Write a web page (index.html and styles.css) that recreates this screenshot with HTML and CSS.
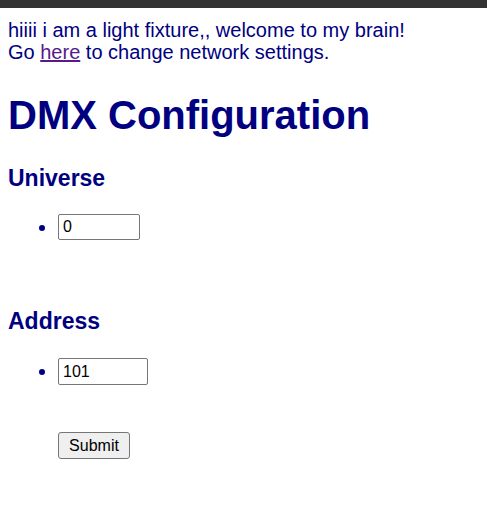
FILE: index.html
```html
<!DOCTYPE html>
<html>
<head>
<meta charset="utf-8">
<link rel="stylesheet" href="styles.css">
</head>
<body>
<div class="topbar"></div>
<main class="page">
  <p class="intro">hiiii i am a light fixture,, welcome to my brain!<br>Go <a href="#" class="link">here</a> to change network settings.</p>
  <h1 class="title">DMX Configuration</h1>
  <form class="form">
    <h2 class="section">Universe</h2>
    <ul class="list">
      <li class="item"><input class="field field-universe" type="text" value="0"></li>
    </ul>
    <h2 class="section section-address">Address</h2>
    <ul class="list list-address">
      <li class="item"><input class="field field-address" type="text" value="101"></li>
    </ul>
    <div class="actions"><button class="submit" type="button">Submit</button></div>
  </form>
</main>
</body>
</html>
```
FILE: styles.css
```css
html, body {
  margin: 0;
  padding: 0;
  background: #ffffff;
}
body {
  font-family: "Liberation Sans", Arial, sans-serif;
  color: #000080;
}
.topbar {
  height: 8px;
  background: #333333;
}
.page {
  padding: 0 8px;
}
.intro {
  margin: 11px 0 0;
  font-size: 20px;
  line-height: 22px;
}
.link {
  color: #551a8b;
}
.title {
  margin: 29px 0 0;
  font-size: 40px;
  font-weight: bold;
  line-height: 46px;
}
.form {
  margin: 0;
}
.section {
  margin: 27px 0 0;
  font-size: 23px;
  font-weight: bold;
  line-height: 26px;
}
.section-address {
  margin-top: 68px;
}
.list {
  margin: 23px 0 0;
  padding-left: 50px;
  list-style: disc;
}
.list-address {
  margin-top: 24px;
}
.item {
  font-size: 20px;
  line-height: 26px;
}
.item::marker {
  color: #000080;
}
.field {
  box-sizing: border-box;
  height: 26px;
  margin: 0;
  padding: 1px 4px;
  border: 1px solid #767676;
  border-radius: 2px;
  font-family: "Liberation Sans", Arial, sans-serif;
  font-size: 16px;
  color: #000000;
  background: #ffffff;
  vertical-align: top;
}
.field-universe {
  width: 82px;
}
.field-address {
  width: 90px;
  height: 27px;
}
.actions {
  margin: 47px 0 0;
  padding-left: 50px;
}
.submit {
  box-sizing: border-box;
  width: 72px;
  height: 27px;
  padding: 0;
  border: 1px solid #767676;
  border-radius: 3px;
  background: #efefef;
  color: #000000;
  font-family: "Liberation Sans", Arial, sans-serif;
  font-size: 16px;
}
```
